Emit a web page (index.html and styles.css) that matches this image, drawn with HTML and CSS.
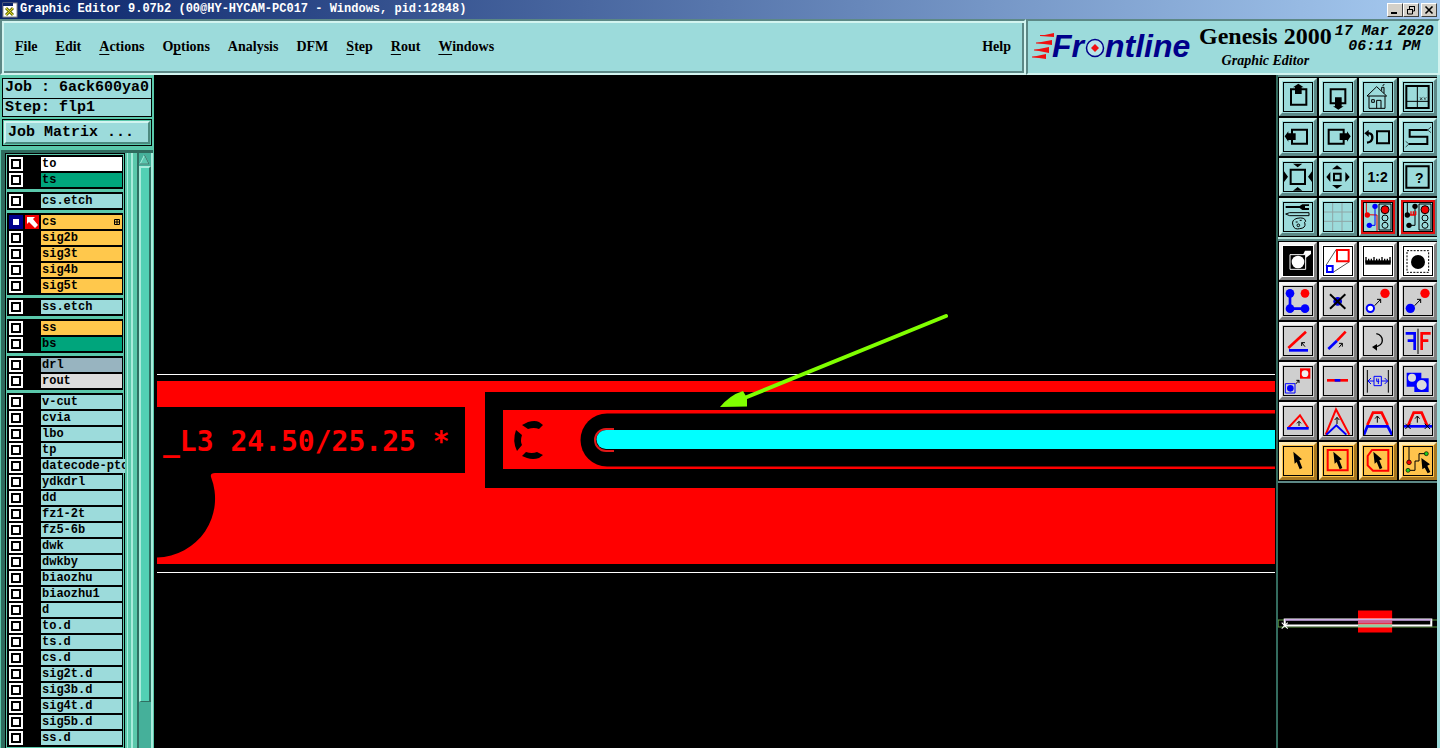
FILE: index.html
```html
<!DOCTYPE html>
<html lang="en">
<head>
<meta charset="utf-8">
<meta name="viewport" content="width=device-width, initial-scale=1">
<title>Graphic Editor 9.07b2</title>
<link rel="stylesheet" href="styles.css">
</head>
<body>
<div class="titlebar">
  <svg class="app-icon" viewBox="0 0 16 16" aria-hidden="true"><rect x="1" y="1" width="14" height="14" fill="#fff" stroke="#8a8a8a"/><rect x="1" y="1" width="10" height="3" fill="#0a246a"/><path d="M4 6l7 7M11 6l-7 7" stroke="#6f7a10" stroke-width="3"/><path d="M4 6l7 7M11 6l-7 7" stroke="#e8d820" stroke-width="1"/></svg>
  <h1 class="window-title">Graphic Editor 9.07b2 (00@HY-HYCAM-PC017 - Windows, pid:12848)</h1>
  <div class="window-buttons">
    <button class="win" aria-label="Minimize"><svg viewBox="0 0 12 10"><path d="M2 8h6" stroke="#000" stroke-width="2"/></svg></button>
    <button class="win" aria-label="Restore"><svg viewBox="0 0 12 10"><path d="M4 1.5h6M4.500 1v3M9.500 1v5h-2M2 4.500h6M2.500 4v5h5v-5" fill="none" stroke="#000"/></svg></button>
    <button class="win close" aria-label="Close"><svg viewBox="0 0 12 10"><path d="M2.500 1.500l7 7M9.500 1.500l-7 7" stroke="#000" stroke-width="1.600"/></svg></button>
  </div>
</div>

<header class="header">
  <nav class="menubar">
    <button class="menu"><u>F</u>ile</button>
    <button class="menu"><u>E</u>dit</button>
    <button class="menu"><u>A</u>ctions</button>
    <button class="menu">O<u>p</u>tions</button>
    <button class="menu">Analysis</button>
    <button class="menu">DFM</button>
    <button class="menu"><u>S</u>tep</button>
    <button class="menu"><u>R</u>out</button>
    <button class="menu"><u>W</u>indows</button>
    <button class="menu help">Help</button>
  </nav>
  <div class="brand">
    <svg class="logo" viewBox="0 -6 164 42" role="img" aria-label="Frontline">
      <g fill="#f01010"><path d="M8 4l14-3v4zM4 11l16-3v5zM2 18l15-3v6zM0 25l14-3v5z"/><path d="M8 3.500h12M4 11h14M2 18h14M0 25h13" stroke="#f01010"/></g>
      <g class="logo-text"><text x="20" y="25">Fr</text><text x="73" y="25">ntline</text></g>
      <circle cx="63" cy="16" r="8.500" fill="#b8e4e8" stroke="#00008b" stroke-width="1.500"/><path d="M63 12l4 4-4 4-4-4z" fill="#f01010"/>
    </svg>
    <div class="product"><strong>Genesis 2000</strong><em>Graphic Editor</em></div>
    <div class="clock"><span>17 Mar 2020</span><span>06:11 PM</span></div>
  </div>
</header>

<main class="workspace">
  <aside class="sidebar">
    <div class="job">
      <div>Job : 6ack600ya0</div>
      <div>Step: flp1</div>
    </div>
    <div class="matrix"><button>Job Matrix ...</button></div>
    <div class="layer-area">
      <div class="layers">
        <div class="group">
          <label class="layer white"><input type="checkbox"><i></i><span>to</span></label>
          <label class="layer green"><input type="checkbox"><i></i><span>ts</span></label>
        </div>
        <div class="group">
          <label class="layer"><input type="checkbox"><i></i><span>cs.etch</span></label>
        </div>
        <div class="group">
          <label class="layer gold"><input type="checkbox" checked><svg class="work" viewBox="0 0 14 14"><path d="M0 0h14v14H0z" fill="#f00000"/><path d="M2 2h8L8 4l5 6-3 3-6-6-2 2z" fill="#fff"/></svg><span>cs<svg class="grid-mark" viewBox="0 0 6 6"><path d="M.5 .5h5v5h-5zM3 0v6M0 3h6" fill="none" stroke="#000"/></svg></span></label>
          <label class="layer gold"><input type="checkbox"><i></i><span>sig2b</span></label>
          <label class="layer gold"><input type="checkbox"><i></i><span>sig3t</span></label>
          <label class="layer gold"><input type="checkbox"><i></i><span>sig4b</span></label>
          <label class="layer gold"><input type="checkbox"><i></i><span>sig5t</span></label>
        </div>
        <div class="group">
          <label class="layer"><input type="checkbox"><i></i><span>ss.etch</span></label>
        </div>
        <div class="group">
          <label class="layer gold"><input type="checkbox"><i></i><span>ss</span></label>
          <label class="layer green"><input type="checkbox"><i></i><span>bs</span></label>
        </div>
        <div class="group">
          <label class="layer slate"><input type="checkbox"><i></i><span>drl</span></label>
          <label class="layer grey"><input type="checkbox"><i></i><span>rout</span></label>
        </div>
        <div class="group">
          <label class="layer"><input type="checkbox"><i></i><span>v-cut</span></label>
          <label class="layer"><input type="checkbox"><i></i><span>cvia</span></label>
          <label class="layer"><input type="checkbox"><i></i><span>lbo</span></label>
          <label class="layer"><input type="checkbox"><i></i><span>tp</span></label>
          <label class="layer"><input type="checkbox"><i></i><span>datecode-pto</span></label>
          <label class="layer"><input type="checkbox"><i></i><span>ydkdrl</span></label>
          <label class="layer"><input type="checkbox"><i></i><span>dd</span></label>
          <label class="layer"><input type="checkbox"><i></i><span>fz1-2t</span></label>
          <label class="layer"><input type="checkbox"><i></i><span>fz5-6b</span></label>
          <label class="layer"><input type="checkbox"><i></i><span>dwk</span></label>
          <label class="layer"><input type="checkbox"><i></i><span>dwkby</span></label>
          <label class="layer"><input type="checkbox"><i></i><span>biaozhu</span></label>
          <label class="layer"><input type="checkbox"><i></i><span>biaozhu1</span></label>
          <label class="layer"><input type="checkbox"><i></i><span>d</span></label>
          <label class="layer"><input type="checkbox"><i></i><span>to.d</span></label>
          <label class="layer"><input type="checkbox"><i></i><span>ts.d</span></label>
          <label class="layer"><input type="checkbox"><i></i><span>cs.d</span></label>
          <label class="layer"><input type="checkbox"><i></i><span>sig2t.d</span></label>
          <label class="layer"><input type="checkbox"><i></i><span>sig3b.d</span></label>
          <label class="layer"><input type="checkbox"><i></i><span>sig4t.d</span></label>
          <label class="layer"><input type="checkbox"><i></i><span>sig5b.d</span></label>
          <label class="layer"><input type="checkbox"><i></i><span>ss.d</span></label>
        </div>
      </div>
      <div class="rail"></div>
      <div class="scrollbar">
        <button class="scroll-up" aria-label="Scroll up"><svg viewBox="0 0 11 13"><path d="M5.500 2L1 11h9z" fill="#5cc8b0" stroke="#a8eedd"/><path d="M5.500 2L10 11H1" fill="none" stroke="#2f6f62"/></svg></button>
        <div class="thumb"></div>
      </div>
    </div>
  </aside>

  <svg class="canvas" viewBox="155 75 1121 673" preserveAspectRatio="xMinYMin slice" role="img" aria-label="Board artwork">
    <path d="M157 374.500H1275M157 572.500H1275" stroke="#fff"/>
    <path d="M157 381H1275V564H157z" fill="#f00"/>
    <path d="M157 407H465V473H215Q210 473 211 477A59 59 0 0 1 157 557.500z"/>
    <path d="M485 392H1275V488H485z"/>
    <path d="M503 410H1275V469H503z" fill="#f00"/>
    <path d="M1275 413.500H607A26.500 26.500 0 0 0 607 466.500H1275z"/>
    <path d="M614 429H606A11 11 0 0 0 606 451H614" fill="none" stroke="#e01818" stroke-width="2"/>
    <path d="M1275 430H606A9.500 9.500 0 0 0 606 449H1275z" fill="#0ff"/>
    <path d="M522 425l6-3q7-2 11 0l4 3-4 4q-5-2-11 0zM516 430l6 5q-2 6 0 10l-5 6q-5-10-1-21zM522 456l4-4q6 2 11 0l6 3-4 3q-6 2-12 0z"/>
    <text class="art-text" x="163" y="451">_L3 24.50/25.25 *</text>
    <path d="M946 316L742 399" stroke="#80ff00" stroke-width="4" stroke-linecap="round"/>
    <path d="M720 407Q730 395 743 391L747 398V406.500z" fill="#80ff00"/>
  </svg>

  <aside class="tools">
    <div class="tool-grid view">
      <button class="tool" aria-label="Pan up"><svg viewBox="3 3 84 84"><path class="k5" d="M24 22h46v46h-46z"/><path d="M46 5L62 16H56V36H36V16H30z"/></svg></button>
      <button class="tool" aria-label="Pan down"><svg viewBox="3 3 84 84"><path class="k5" d="M23 22h44v42h-44z"/><path d="M46 83L62 73H56V46H36V73H30z"/></svg></button>
      <button class="tool" aria-label="Home"><svg viewBox="3 3 84 84"><path class="k3" d="M12 42L41 14L71 42zM18 42V79H66V42M41 79V55H54V79M26 53h8v8h-8zM56 26V16H63V34M59 12l5-6"/></svg></button>
      <button class="tool" aria-label="Zoom to coordinates"><svg viewBox="3 3 84 84"><path class="k5" d="M10 12h67v66h-67z"/><path class="k3" d="M43 12V78M10 58H77"/><path class="k2" d="M51 46l7 8M58 46l-7 8M62 46l4 4 4-4M66 50v4"/></svg></button>
      <button class="tool" aria-label="Pan left"><svg viewBox="3 3 84 84"><path class="k5" d="M27 23h45v42h-45z"/><path d="M5 43L16 28V34H38V54H16V59z"/></svg></button>
      <button class="tool" aria-label="Pan right"><svg viewBox="3 3 84 84"><path class="k5" d="M17 23h45v42h-45z"/><path d="M83 43L72 28V34H50V54H72V59z"/></svg></button>
      <button class="tool" aria-label="Previous view"><svg viewBox="3 3 84 84"><path class="k5" d="M42 28h36v36h-36z"/><path d="M12 34H20Q29 36 28 48Q27 60 12 62" fill="none" stroke="#000" stroke-width="7"/><path d="M4 34L17 23V45z"/></svg></button>
      <button class="tool" aria-label="Serpentine"><svg viewBox="3 3 84 84"><path class="k5" d="M74 24H20V44H73V66H18"/><path class="k2" d="M74 24l10-9M74 24l10 8M18 66l-10-8M18 66l-10 9"/></svg></button>
      <button class="tool" aria-label="Zoom out"><svg viewBox="3 3 84 84"><path class="k5" d="M23 23h43v43h-43z"/><path d="M30 5H58L44 16zM30 86H58L44 75zM3 28V60L15 44zM87 28V60L75 44z"/></svg></button>
      <button class="tool" aria-label="Zoom in"><svg viewBox="3 3 84 84"><path class="k5" d="M33 35h20v20h-20z"/><path d="M42 10L58 22H27zM42 80L58 69H27zM10 45L22 30V60zM80 45L67 30V60z"/></svg></button>
      <button class="tool" aria-label="Zoom ratio"><svg viewBox="3 3 84 84"><text class="icon-text" x="44" y="60">1:2</text></svg></button>
      <button class="tool" aria-label="Query"><svg viewBox="3 3 84 84"><path class="k5" d="M10 13h67v64h-67z"/><text class="icon-text" x="49" y="62">?</text></svg></button>
      <button class="tool" aria-label="Options"><svg viewBox="3 3 84 84"><path d="M8 12H50L58 7H78V12H66V18H78V24H58L50 18H8z"/><path class="k3" d="M8 36L20 32H78V41H20zM30 70Q24 54 42 49Q66 44 68 58Q62 60 66 66Q68 78 50 80Q34 84 30 70zM38 60h6M50 55h6M42 70a4 4 0 1 0 8 0 4 4 0 1 0-8 0"/></svg></button>
      <button class="tool" aria-label="Grid"><svg viewBox="3 3 84 84"><path d="M29 3V87M57 3V87M3 30H87M3 58H87" stroke="#8fa6a6" stroke-width="3"/></svg></button>
      <button class="tool alert" aria-label="Net colouring"><svg viewBox="3 3 84 84"><path d="M10 3V38L42 39V87" fill="none" stroke="#f00000" stroke-width="3"/><circle cx="13" cy="39" r="8" fill="#f00000"/><path d="M36 13V70H19" fill="none" stroke="#00f" stroke-width="3"/><circle cx="36" cy="13" r="8" fill="#00f"/><circle cx="19" cy="70" r="8" fill="#00f"/><path class="k3" d="M48 6h36v78h-36z"/><circle class="k3 red" cx="66" cy="23" r="12"/><circle class="k3" cx="66" cy="48" r="9"/><circle class="k3" cx="66" cy="70" r="9"/></svg></button>
      <button class="tool alert" aria-label="Net check"><svg viewBox="3 3 84 84"><path class="k3" d="M36 13V70H18M13 39V3"/><path d="M20 39H38M24 39V28M31 39V28M38 39V28" stroke="#f00000" stroke-width="4"/><circle cx="36" cy="13" r="8"/><circle cx="13" cy="39" r="8"/><circle cx="18" cy="70" r="8"/><path class="k3" d="M48 6h36v78h-36z"/><circle class="k3 red" cx="66" cy="23" r="12"/><circle class="k3" cx="66" cy="48" r="9"/><circle class="k3" cx="66" cy="70" r="9"/></svg></button>
    </div>
    <div class="tool-grid edit">
      <button class="tool lit" aria-label="Negative"><svg viewBox="3 3 84 84"><path d="M3 3H87V87H3z"/><path d="M58 30L66 14H84V24L68 36z" fill="#fff"/><path d="M21 26h47v44h-47z" stroke="#fff" stroke-width="3"/><circle cx="45" cy="48" r="19" fill="#fff"/></svg></button>
      <button class="tool lit" aria-label="Scale"><svg viewBox="3 3 84 84"><path class="k2" d="M9 58L40 10M30 79L78 48"/><path class="r5" d="M42 12h35v34h-35z"/><path class="b5" d="M12 60h17v18h-17z"/></svg></button>
      <button class="tool lit" aria-label="Measure"><svg viewBox="3 3 84 84"><path d="M7 43H83V56H7z"/><path d="M9 33V50M17 38V50M25 38V50M33 33V50M41 38V50M49 38V50M57 33V50M65 38V50M73 38V50M81 33V50" stroke="#000" stroke-width="4"/></svg></button>
      <button class="tool lit" aria-label="Pad"><svg viewBox="3 3 84 84"><path class="k3" stroke-dasharray="6 4" d="M12 14h65v65h-65z"/><circle cx="45" cy="48" r="21"/></svg></button>
      <button class="tool" aria-label="Connect"><svg viewBox="3 3 84 84"><path d="M21 22V68H66" fill="none" stroke="#00f" stroke-width="8"/><g fill="#00f"><circle cx="21" cy="22" r="13"/><circle cx="21" cy="68" r="13"/><circle cx="66" cy="68" r="13"/></g><circle cx="66" cy="22" r="13" fill="#f00"/></svg></button>
      <button class="tool" aria-label="Delete"><svg viewBox="3 3 84 84"><circle cx="44" cy="46" r="13" fill="#00d"/><path class="k5" d="M21 25L67 68M67 25L21 68"/></svg></button>
      <button class="tool" aria-label="Move"><svg viewBox="3 3 84 84"><circle cx="66" cy="22" r="14" fill="#f00"/><circle cx="22" cy="67" r="11" fill="#fff" stroke="#00f" stroke-width="6"/><path class="k3" d="M35 59L53 40M42 40H53V51"/></svg></button>
      <button class="tool" aria-label="Copy"><svg viewBox="3 3 84 84"><circle cx="66" cy="22" r="14" fill="#f00"/><circle cx="22" cy="67" r="14" fill="#00f"/><path class="k3" d="M35 59L53 40M42 40H53V51"/></svg></button>
      <button class="tool" aria-label="Rotate line"><svg viewBox="3 3 84 84"><path class="r7" d="M16 66L69 17"/><path class="b7" d="M18 73H75"/><path class="k3" d="M66 62L56 50M56 60V50H66"/></svg></button>
      <button class="tool" aria-label="Extend line"><svg viewBox="3 3 84 84"><path class="r7" d="M42 44L68 17"/><path class="b7" d="M16 69L42 44"/><path class="k3" d="M48 64L58 52M48 52H58V62"/></svg></button>
      <button class="tool" aria-label="Rotate"><svg viewBox="3 3 84 84"><path class="k3 thick" d="M40 23Q58 27 58 44Q57 60 34 63"/><path d="M27 63L42 54V74z"/></svg></button>
      <button class="tool" aria-label="Mirror"><svg viewBox="3 3 84 84"><path class="b7" d="M8 22H35V72M14 44H35"/><path class="k3" d="M45 8V84"/><path class="r7" d="M83 22H56V72M76 44H56"/></svg></button>
      <button class="tool" aria-label="Replace"><svg viewBox="3 3 84 84"><path d="M51 7h31v31h-31z" fill="#f00"/><circle cx="66" cy="23" r="10" fill="#eee"/><path d="M7 53h29v28h-29z" fill="none" stroke="#00f" stroke-width="3"/><circle cx="22" cy="67" r="10" fill="#00f"/><path class="k3" d="M38 54L48 43M40 43H48V51"/></svg></button>
      <button class="tool" aria-label="Break line"><svg viewBox="3 3 84 84"><path class="r7" d="M12 43H75"/><path class="b7" d="M35 43H52"/></svg></button>
      <button class="tool" aria-label="Spacing"><svg viewBox="3 3 84 84"><path class="k3" d="M13 12V80M76 12V80"/><path d="M33 31h22v28h-22zM33 45H15M24 36l-9 9 9 9M55 45H74M65 36l9 9-9 9M41 37V46H49M46 38V54" fill="none" stroke="#00f" stroke-width="3"/></svg></button>
      <button class="tool" aria-label="Merge"><svg viewBox="3 3 84 84"><path d="M11 20H55V37H77V78H34V62H11z" fill="#00f"/><circle cx="27" cy="35" r="12" fill="#ddd"/><circle cx="56" cy="57" r="15" fill="#ddd"/></svg></button>
      <button class="tool" aria-label="Triangle"><svg viewBox="3 3 84 84"><path class="r5" d="M14 67L51 28L76 67"/><path class="b7" d="M12 67H77"/><path class="k3" d="M48 60V47M42 52l6-6 6 6"/></svg></button>
      <button class="tool" aria-label="Sharp corner"><svg viewBox="3 3 84 84"><path class="r5" d="M8 86L39 10L79 86"/><path class="b5" d="M10 86L40 58L70 86"/><path class="k3" d="M42 54V35M35 42l7-8 7 8"/></svg></button>
      <button class="tool" aria-label="Chamfer"><svg viewBox="3 3 84 84"><path class="r7" d="M13 57L30 20H56L74 57"/><path class="b7" d="M3 86L13 61H74L87 86"/><path class="k3" d="M43 50V31M36 38l7-8 7 8"/></svg></button>
      <button class="tool" aria-label="Chamfer and trim"><svg viewBox="3 3 84 84"><path class="r7" d="M15 59L32 20H56L73 59"/><path class="b7" d="M3 61H87"/><path class="k3" d="M43 50V31M36 38l7-8 7 8M7 53l16 16M23 53L7 69M65 53l16 16M81 53L65 69"/></svg></button>
      <button class="tool gold" aria-label="Select"><svg viewBox="3 3 84 84"><path d="M31 17L57 40L49 43L58 66L50 70L41 48L35 53z"/></svg></button>
      <button class="tool gold" aria-label="Select in box"><svg viewBox="3 3 84 84"><path class="r5" d="M14 12h60v61h-60z"/><path d="M31 17L57 40L49 43L58 66L50 70L41 48L35 53z"/></svg></button>
      <button class="tool gold" aria-label="Select in polygon"><svg viewBox="3 3 84 84"><path class="r5" d="M14 30L27 12H76V74H30L14 58z"/><path d="M31 17L57 40L49 43L58 66L50 70L41 48L35 53z"/></svg></button>
      <button class="tool gold" aria-label="Select net"><svg viewBox="3 3 84 84"><path class="k3" d="M18 3V46M15 73H36V45H48V23H70"/><circle class="k2 red" cx="18" cy="49" r="7"/><circle class="k2 lime" cx="70" cy="23" r="6"/><circle class="k2 lime" cx="15" cy="73" r="6"/><path d="M55 36L81 55L73 59L82 78L74 82L65 65L58 70z"/></svg></button>
    </div>
    <svg class="overview" viewBox="1278 484 159 264" preserveAspectRatio="xMidYMin slice" role="img" aria-label="Board overview">
      <path d="M1278.500 620.500H1437M1278.500 627.500H1437M1278.500 620V628" stroke="#5c9a40"/>
      <path d="M1358 611h34v22h-34z" fill="#f00"/>
      <path d="M1285 620H1431V626H1285z" fill="none" stroke="#fff" stroke-width="2"/>
      <path d="M1285 620.500H1431" stroke="#a060d0"/><path d="M1358 621h34v3h-34z" fill="#d06090"/><path d="M1358 625h34v3h-34z" fill="#8cd0a0"/>
      <path d="M1282 623l6 6M1288 623l-6 6" stroke="#fff"/>
    </svg>
  </aside>
</main>
</body>
</html>
```
FILE: styles.css
```css
* { box-sizing: border-box; }
body {
  margin: 0;
  height: 100vh;
  display: flex;
  flex-direction: column;
  overflow: hidden;
  background: #000;
  color: #000;
  font-family: "Liberation Serif", serif;
}
button { padding: 0; margin: 0; font: inherit; color: inherit; cursor: pointer; }
svg { display: block; }

.titlebar {
  display: flex;
  align-items: center;
  height: 19px;
  flex: none;
  padding: 0 3px 0 2px;
  gap: 2px;
  background: linear-gradient(90deg, #0a246a, #a6caf0);
  color: #fff;
}
.app-icon { width: 16px; height: 16px; }
.window-title {
  flex: 1;
  margin: 0;
  font: bold 12px/19px "Liberation Mono", monospace;
  white-space: nowrap;
}
.window-buttons { display: flex; }
.win {
  width: 16px;
  height: 14px;
  background: #d4d0c8;
  border: 1px solid;
  border-color: #fff #404040 #404040 #fff;
}
.win svg { width: 12px; height: 10px; margin: 0 auto; }
.close { margin-left: 2px; }

.header { display: flex; flex: none; height: 56px; background: #9cdbdb; }
.menubar {
  flex: 1;
  display: flex;
  align-items: center;
  padding: 0 13px;
  gap: 18px;
  border: 2px solid;
  border-color: #5c8886 #d2f4f0 #d2f4f0 #5c8886;
  box-shadow: inset 2px 2px #d2f4f0, inset -2px -2px #5c8886;
}
.menu {
  border: 0;
  background: none;
  font: bold 14px/20px "Liberation Serif", serif;
}
.menu u { text-underline-offset: 3px; }
.help { margin-left: auto; }
.brand {
  flex: none;
  width: 414px;
  display: flex;
  align-items: flex-start;
  gap: 3px;
  padding-left: 4px;
  border: 2px solid;
  border-color: #5c8886 #d2f4f0 #d2f4f0 #5c8886;
}
.logo { flex: none; width: 164px; height: 42px; margin-top: 5px; }
.logo-text { font: italic bold 32px "Liberation Sans", sans-serif; fill: #00008b; }
.product { display: flex; flex-direction: column; align-items: center; }
.product strong { font-size: 24px; line-height: 30px; white-space: nowrap; }
.product em { font-size: 14px; line-height: 20px; font-weight: bold; }
.clock {
  display: flex;
  flex-direction: column;
  align-items: center;
  padding-top: 3px;
  font: italic bold 15px/15px "Liberation Mono", monospace;
  white-space: nowrap;
}

.workspace {
  flex: 1;
  min-height: 0;
  display: grid;
  grid-template-columns: 155px minmax(0, 1fr) 164px;
  grid-template-rows: minmax(0, 1fr);
}

.sidebar {
  display: flex;
  flex-direction: column;
  min-height: 0;
  padding: 3px 1px 0;
  background: #5ac8ab;
  border-right: 1px solid #000;
  font-family: "Liberation Mono", monospace;
  font-weight: bold;
}
.job { margin: 0 1px; border: 1px solid #000; background: #9cdbdb; font-size: 15px; white-space: nowrap; }
.job div { height: 19px; line-height: 18px; padding-left: 2px; }
.job div + div { height: 18px; border-top: 1px solid #000; }
.matrix { margin: 2px 1px 4px; padding: 1px; border: 1px solid #000; }
.matrix button {
  display: block;
  width: 100%;
  height: 23px;
  padding-left: 2px;
  border: 2px solid;
  border-color: #d2f4f0 #4c8a80 #4c8a80 #d2f4f0;
  background: #9cdbdb;
  font-size: 15px;
  line-height: 18px;
  text-align: left;
}
.layer-area {
  flex: 1;
  min-height: 0;
  display: flex;
  border-top: 3px solid #2f6b5e;
  border-left: 4px solid #2f6b5e;
}
.layers {
  flex: 1;
  min-width: 0;
  display: flex;
  flex-direction: column;
  gap: 3px;
  padding: 1px 1px 0;
  border-top: 1px solid #000;
  border-left: 1px solid #000;
  border-right: 1px solid #000;
}
.group { flex: none; background: #000; padding: 1px 0 1px 2px; }
.layer {
  display: grid;
  grid-template-columns: 14px 14px 1fr;
  gap: 2px;
  height: 16px;
  align-items: center;
  padding-right: 1px;
}
.layer input {
  appearance: none;
  width: 14px;
  height: 14px;
  margin: 0;
  background: #fff;
  border: 2px solid #fff;
  box-shadow: inset 0 0 0 2px #000;
}
.layer input:checked { border-color: #00008b; box-shadow: inset 0 0 0 2px #00008b; }
.work { width: 14px; height: 14px; }
.layer span {
  display: flex;
  align-items: center;
  justify-content: space-between;
  height: 14px;
  padding: 0 2px 0 1px;
  background: #9cdbdb;
  font-size: 12px;
  line-height: 14px;
  white-space: nowrap;
}
.grid-mark { width: 6px; height: 6px; }
.layer.white span { background: #fff; }
.layer.green span { background: #00a57c; }
.layer.gold span { background: #ffc84c; }
.layer.slate span { background: #98b4c0; }
.layer.grey span { background: #dcdcdc; }
.rail {
  width: 12px;
  background: linear-gradient(90deg, #5ac8ab 2px, #a8ecdc 2px, #a8ecdc 3px, #5ac8ab 3px, #5ac8ab 6px, #a8ecdc 6px, #a8ecdc 8px, #5ac8ab 8px);
}
.scrollbar {
  width: 16px;
  display: flex;
  flex-direction: column;
  border-left: 2px solid #2f6f62;
  border-right: 2px solid #a8ecdc;
  background: #45b09a;
}
.scroll-up { flex: none; width: 12px; height: 13px; border: 0; background: none; }
.scroll-up svg { width: 11px; height: 13px; }
.thumb {
  height: 90%;
  background: #52d0b4;
  border: 2px solid;
  border-color: #a8ecdc #2f6f62 #2f6f62 #a8ecdc;
  border-bottom-width: 1px;
}

.canvas { width: 100%; height: 100%; background: #000; }
.art-text { font: bold 28px "DejaVu Sans Mono", monospace; fill: #f00; white-space: pre; }

.tools {
  display: flex;
  flex-direction: column;
  min-height: 0;
  border-left: 2px solid #336b5e;
  border-right: 3px solid #9cdbdb;
}
.tool-grid {
  flex: none;
  display: grid;
  grid-template-columns: repeat(4, 38px);
  gap: 2px;
  padding: 1px 0 1px 1px;
  border-top: 2px solid #5c8886;
  border-bottom: 2px solid #b8e6e0;
}
.edit { border-bottom-color: #5c8886; }
.tool {
  width: 38px;
  height: 38px;
  padding: 1px;
  background: #9cdbdb;
  border: 3px solid;
  border-color: #ccf2ec #5c8886 #5c8886 #ccf2ec;
}
.edit .tool { background: #cfcfcf; border-color: #f4f4f4 #808080 #808080 #f4f4f4; }
.edit .lit { background: #fff; }
.edit .gold { background: #ffc44c; border-color: #ffe9b0 #a87820 #a87820 #ffe9b0; }
.tool svg { width: 30px; height: 30px; border: 1px solid #000; }
.tool.alert svg { outline: 2px solid #e01010; }
.k2, .k3, .k5 { fill: none; stroke: #000; }
.k2 { stroke-width: 2; }
.k3 { stroke-width: 3; }
.k3.thick { stroke-width: 4; }
.k5 { stroke-width: 6; }
.r5, .r7 { fill: none; stroke: #f00; stroke-width: 6; }
.b5, .b7 { fill: none; stroke: #00f; stroke-width: 6; }
.r7, .b7 { stroke-width: 8; }
.red { fill: #f00000; }
.lime { fill: #20d020; }
.icon-text { font: bold 42px "Liberation Sans", sans-serif; text-anchor: middle; }
.overview { flex: 1; min-height: 0; width: 100%; background: #000; }
```
